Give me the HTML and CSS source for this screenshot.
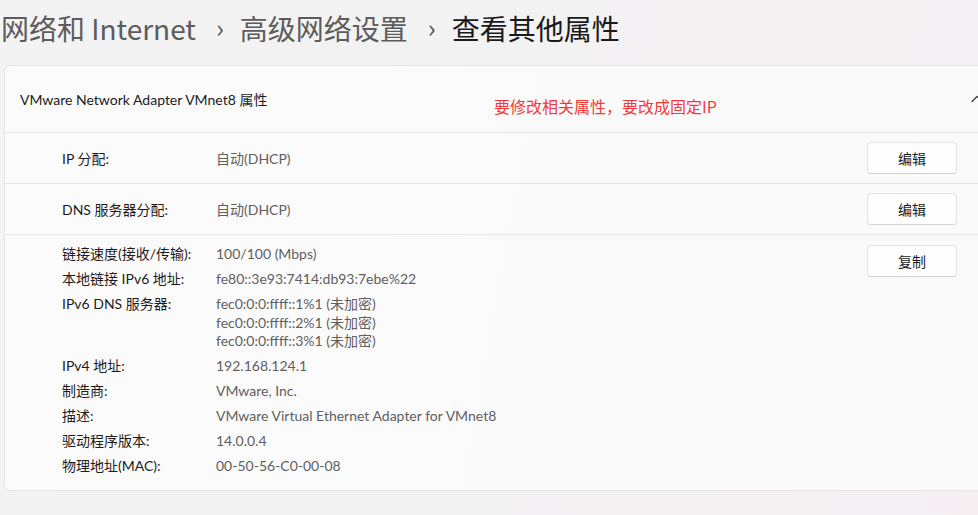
FILE: index.html
```html
<!DOCTYPE html>
<html lang="zh-CN">
<head>
<meta charset="utf-8">
<title>查看其他属性</title>
<link rel="stylesheet" href="styles.css">
</head>
<body>
<div class="page">
  <nav class="crumbs">
    <span class="crumb">网络和 Internet</span>
    <span class="sep">›</span>
    <span class="crumb">高级网络设置</span>
    <span class="sep">›</span>
    <span class="crumb current">查看其他属性</span>
  </nav>

  <section class="card">
    <header class="card-head">
      <span class="card-title">VMware Network Adapter VMnet8 属性</span>
      <span class="note">要修改相关属性，要改成固定IP</span>
      <svg class="chev" width="14" height="14" viewBox="0 0 14 14"><path d="M2 9.5 L7 4.5 L12 9.5" fill="none" stroke="#333" stroke-width="1.2" stroke-linecap="round" stroke-linejoin="round"/></svg>
    </header>

    <div class="row">
      <span class="label">IP 分配:</span>
      <span class="value">自动(DHCP)</span>
      <button class="btn">编辑</button>
    </div>

    <div class="row">
      <span class="label">DNS 服务器分配:</span>
      <span class="value">自动(DHCP)</span>
      <button class="btn">编辑</button>
    </div>

    <div class="row details">
      <dl class="grid">
        <dt>链接速度(接收/传输):</dt><dd>100/100 (Mbps)</dd>
        <dt>本地链接 IPv6 地址:</dt><dd>fe80::3e93:7414:db93:7ebe%22</dd>
        <dt>IPv6 DNS 服务器:</dt><dd>fec0:0:0:ffff::1%1 (未加密)<br>fec0:0:0:ffff::2%1 (未加密)<br>fec0:0:0:ffff::3%1 (未加密)</dd>
        <dt>IPv4 地址:</dt><dd>192.168.124.1</dd>
        <dt>制造商:</dt><dd>VMware, Inc.</dd>
        <dt>描述:</dt><dd>VMware Virtual Ethernet Adapter for VMnet8</dd>
        <dt>驱动程序版本:</dt><dd>14.0.0.4</dd>
        <dt>物理地址(MAC):</dt><dd>00-50-56-C0-00-08</dd>
      </dl>
      <button class="btn">复制</button>
    </div>
  </section>
</div>
</body>
</html>
```
FILE: styles.css
```css
html, body {
  margin: 0;
  padding: 0;
  width: 978px;
  height: 515px;
  overflow: hidden;
}
body {
  background: linear-gradient(100deg, #f3f3f3 0%, #f3f2f3 55%, #f5eff2 100%);
  font-family: "Lato", "Noto Sans CJK SC", sans-serif;
  color: #1b1b1b;
}
.page {
  display: flex;
  flex-direction: column;
}
.crumbs {
  display: flex;
  align-items: center;
  height: 56px;
  padding-left: 1px;
  font-size: 28px;
  font-family: "Noto Sans CJK SC", sans-serif;
  font-weight: 400;
  color: #5c5c5c;
  white-space: nowrap;
}
.crumbs .sep {
  font-size: 26px;
  margin: 0 16px 0 20px;
  color: #555;
  position: relative;
  top: -2px;
}
.crumbs .current {
  color: #1a1a1a;
}
.card {
  position: relative;
  margin: 9px 0 0 4px;
  width: 990px;
  background: rgba(252, 252, 252, 0.85);
  border: 1px solid #e5e5e5;
  border-radius: 6px;
}
.card-head {
  display: flex;
  align-items: center;
  height: 66px;
  padding-left: 15px;
  font-size: 14px;
}
.card-title {
  position: relative;
  top: 0;
}
.note {
  position: absolute;
  left: 489px;
  top: 28px;
  font-size: 16px;
  color: #f43a3a;
  font-family: "Noto Sans CJK SC", sans-serif;
}
.chev {
  position: absolute;
  left: 965px;
  top: 26px;
}
.row {
  display: flex;
  align-items: center;
  height: 50px;
  border-top: 1px solid #e5e5e5;
  padding: 0 38px 0 57px;
  font-size: 14px;
}
.label {
  width: 154px;
  color: #1b1b1b;
}
.value {
  flex: 1;
  color: #5f5f5f;
}
.btn {
  width: 90px;
  height: 32px;
  background: #fefefe;
  border: 1px solid #e3e3e3;
  border-bottom-color: #d2d2d2;
  border-radius: 4px;
  font-family: "Noto Sans CJK SC", sans-serif;
  font-size: 14px;
  color: #1b1b1b;
  padding: 0;
}
.details {
  height: auto;
  align-items: flex-start;
  padding-top: 10px;
  padding-bottom: 14px;
}
.grid {
  flex: 1;
  display: grid;
  grid-template-columns: 154px 1fr;
  row-gap: 6.5px;
  margin: 0;
  line-height: 18.5px;
}
.grid dt {
  margin: 0;
  color: #1b1b1b;
}
.grid dd {
  margin: 0;
  color: #5f5f5f;
}
```
